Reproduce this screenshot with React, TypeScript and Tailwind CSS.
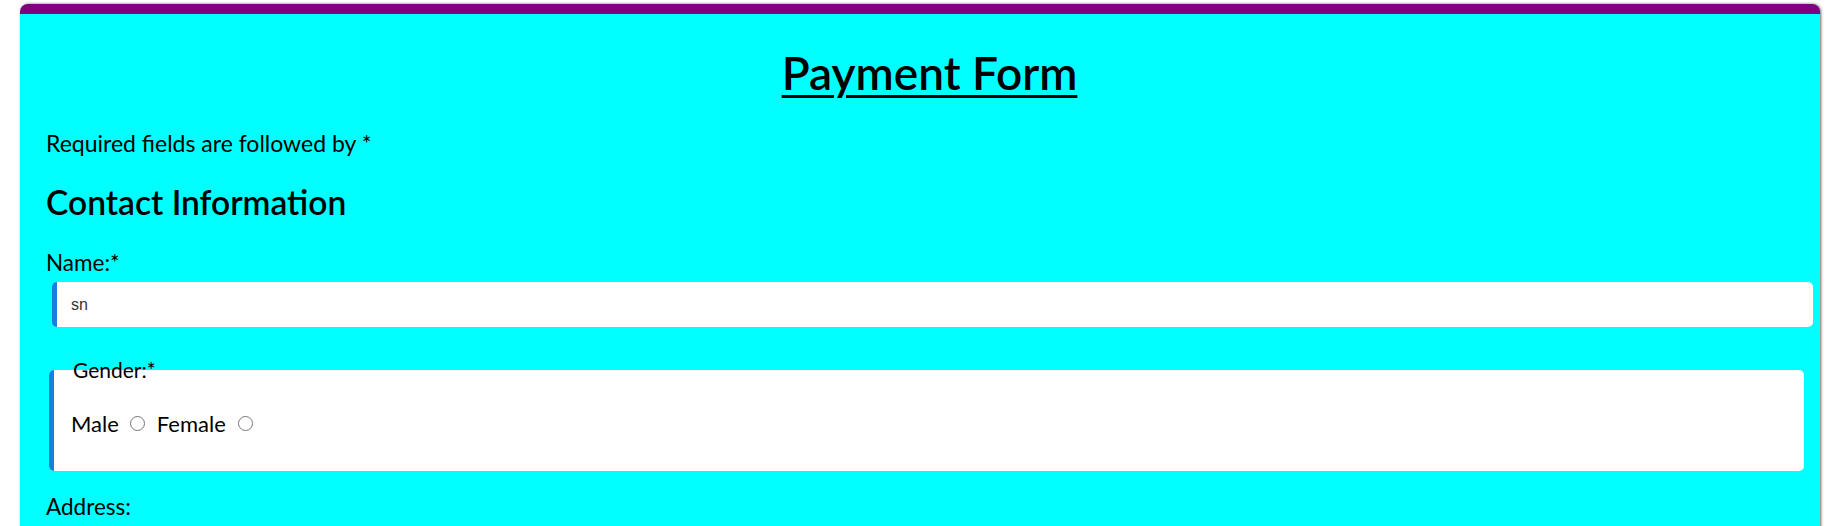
export default function App() {
  return (
    <div className="min-h-[526px] bg-white pt-[4px] pl-[20px] font-['Lato','Noto_Sans',sans-serif] text-black overflow-hidden">
      <div className="w-[1800px] h-[540px] rounded-t-[8px] border-t-[10px] border-[#800080] bg-[#00ffff] shadow-[1px_0_3px_rgba(0,0,0,0.6)] pl-[26px] pr-[7px]">
        <h1 className="mt-[31px] h-[55px] text-center text-[46px] leading-[55px] font-semibold underline decoration-[3px] underline-offset-[5px]">
          Payment Form
        </h1>
        <p className="mt-[30px] h-[27px] text-[23px] leading-[27px]">Required fields are followed by *</p>
        <h2 className="mt-[25px] h-[40px] text-[33.6px] leading-[40px] font-semibold">Contact Information</h2>
        <label htmlFor="name" className="block mt-[27px] h-[27px] text-[22.5px] leading-[27px]">
          Name:*
        </label>
        <input
          id="name"
          type="text"
          defaultValue="sn"
          className="mt-[6px] ml-[6px] block w-[calc(100%-6px)] h-[45px] rounded-[5px] border-0 border-l-[5px] border-[#1a7de0] bg-white pl-[14px] text-[16px] text-[#333] font-['Liberation_Sans',Arial,sans-serif] outline-none"
        />
        <fieldset className="mt-[30px] ml-[3px] mr-[9px] rounded-[5px] border-0 border-l-[5px] border-solid border-[#1a7de0] bg-white pl-[17px] pb-[35px]">
          <legend className="text-[21px] leading-[25px] pl-[2px]">Gender:*</legend>
          <div className="mt-[29px] flex items-center h-[25px] text-[22px]">
            <label htmlFor="male" className="leading-[25px]">Male</label>
            <input id="male" type="radio" name="gender" className="ml-[11px] mr-[12px] w-[15px] h-[15px]" />
            <label htmlFor="female" className="leading-[25px]">Female</label>
            <input id="female" type="radio" name="gender" className="ml-[12px] w-[15px] h-[15px]" />
          </div>
        </fieldset>
        <label htmlFor="address" className="block mt-[22px] h-[27px] text-[22.5px] leading-[27px]">
          Address:
        </label>
      </div>
    </div>
  );
}
